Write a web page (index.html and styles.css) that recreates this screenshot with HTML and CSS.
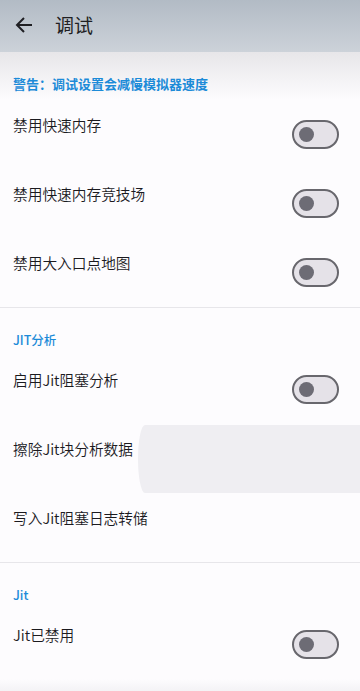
FILE: index.html
```html
<!DOCTYPE html>
<html lang="zh-CN">
<head>
<meta charset="utf-8">
<link rel="stylesheet" href="styles.css">
</head>
<body>
<header class="appbar">
  <svg class="back" width="24" height="24" viewBox="0 0 24 24"><path d="M20 12H5.5M12 5l-7 7 7 7" fill="none" stroke="#1f1f23" stroke-width="2"/></svg>
  <h1 class="title">调试</h1>
</header>
<main class="content">
  <section class="group">
    <div class="category">警告：调试设置会减慢模拟器速度</div>
    <div class="row"><span class="label">禁用快速内存</span><span class="switch"><span class="knob"></span></span></div>
    <div class="row"><span class="label">禁用快速内存竞技场</span><span class="switch"><span class="knob"></span></span></div>
    <div class="row"><span class="label">禁用大入口点地图</span><span class="switch"><span class="knob"></span></span></div>
  </section>
  <section class="group">
    <div class="category cat-small">JIT分析</div>
    <div class="row"><span class="label">启用Jit阻塞分析</span><span class="switch"><span class="knob"></span></span></div>
    <div class="row pressed"><span class="ripple"></span><span class="label">擦除Jit块分析数据</span></div>
    <div class="row"><span class="label">写入Jit阻塞日志转储</span></div>
  </section>
  <section class="group last">
    <div class="category cat-small">Jit</div>
    <div class="row"><span class="label">Jit已禁用</span><span class="switch"><span class="knob"></span></span></div>
    <div class="tail"></div>
  </section>
</main>
</body>
</html>
```
FILE: styles.css
```css
* { box-sizing: border-box; }
html, body { margin: 0; padding: 0; }
body {
  width: 360px;
  height: 691px;
  overflow: hidden;
  background: #fdfcfe;
  font-family: "Noto Sans CJK SC", "Noto Sans", Roboto, sans-serif;
  color: #1d1b20;
}
.appbar {
  height: 52px;
  display: flex;
  align-items: center;
  padding-left: 12px;
  background: linear-gradient(#b2bbc5, #ccd2d9);
}
.back { display: block; margin-top: -2px; }
.title {
  margin: -3px 0 0 19px;
  font-size: 19px;
  font-weight: 400;
  line-height: 24px;
  color: #1f1f23;
}
.content {
  background: linear-gradient(#e7e6e9, #fdfcfe 48px);
}
.group { border-bottom: 1px solid #e7e6ea; }
.group.last { border-bottom: 0; }
.category {
  height: 48px;
  padding: 23px 0 0 13px;
  font-size: 13px;
  line-height: 18px;
  font-weight: 700;
  color: #1c8bd8;
}
.cat-small { font-size: 12.5px; font-weight: 500; }
.group + .group .category { height: 47px; }
.row {
  position: relative;
  height: 69px;
  display: flex;
  justify-content: space-between;
  align-items: center;
  padding: 0 21px 0 13px;
}
.label {
  position: relative;
  align-self: flex-start;
  padding-top: 14px;
  font-size: 14.7px;
  line-height: 22px;
  font-weight: 350;
  color: #1b1a1f;
}
.switch {
  width: 47px;
  height: 29px;
  border: 2px solid #68676d;
  border-radius: 15px;
  background: #e5e2e8;
  display: flex;
  align-items: center;
  padding-left: 5px;
}
.knob {
  width: 15px;
  height: 15px;
  border-radius: 50%;
  background: #6d6c75;
}
.ripple {
  position: absolute;
  left: 138px;
  right: 0;
  top: 1px;
  bottom: 0;
  background: #efeef2;
  border-radius: 7px 0 0 7px / 34px 0 0 34px;
}
.tail {
  height: 14px;
  background: linear-gradient(#fdfcfe, #f2f1f4);
}
```
